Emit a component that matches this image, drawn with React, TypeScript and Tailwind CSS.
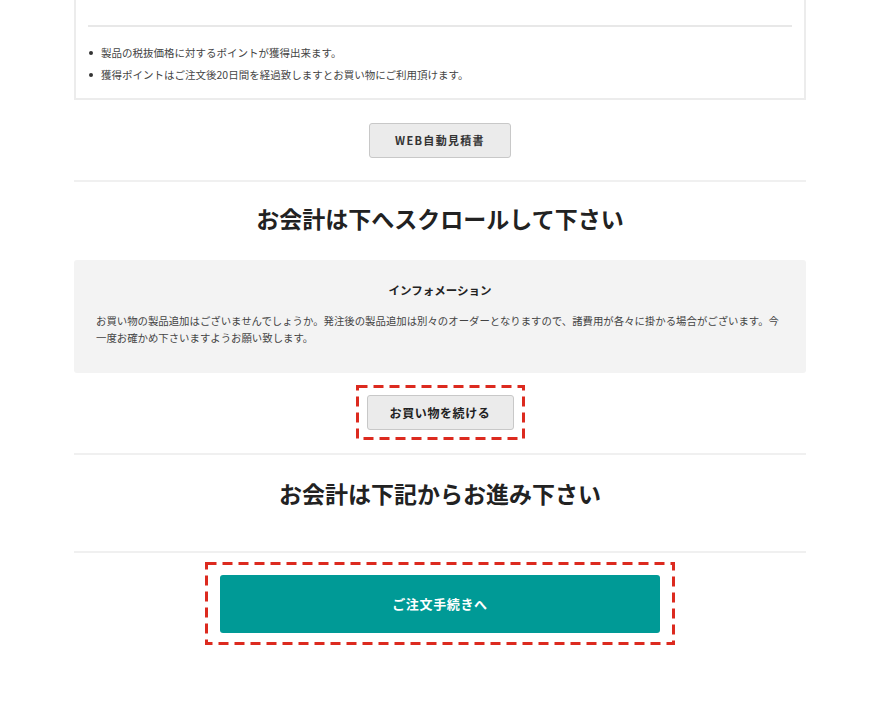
const jp = { fontFamily: '"Noto Sans CJK JP", "Noto Sans", sans-serif' };

const notes = [
  '製品の税抜価格に対するポイントが獲得出来ます。',
  '獲得ポイントはご注文後20日間を経過致しますとお買い物にご利用頂けます。',
];

function Dashed({ className, children }: { className: string; children: React.ReactNode }) {
  return (
    <div className={`relative ${className}`}>
      <svg className="pointer-events-none absolute inset-0 h-full w-full" preserveAspectRatio="none">
        <rect
          x="1.5"
          y="1.5"
          width="calc(100% - 3px)"
          height="calc(100% - 3px)"
          fill="none"
          stroke="#dc2a1f"
          strokeWidth="3"
          strokeDasharray="10 6"
        />
      </svg>
      {children}
    </div>
  );
}

export default function App() {
  return (
    <div className="min-h-[704px] bg-white text-[#333]" style={jp}>
      <div className="ml-[74px] w-[732px]">
        {/* point card */}
        <div className="border-x-2 border-b-2 border-[#ececec] px-3 pt-[25px] pb-[15px]">
          <div className="h-[2px] bg-[#e8e8e8]" />
          <ul className="mt-[18px] flex flex-col gap-[6px]">
            {notes.map((n) => (
              <li key={n} className="flex h-[16px] items-center text-[10.5px] text-[#444]">
                <span className="ml-[1px] mr-[8px] h-[4px] w-[4px] rounded-full bg-[#333]" />
                {n}
              </li>
            ))}
          </ul>
        </div>

        <div className="mt-[23px] flex justify-center">
          <button className="h-[35px] w-[142px] rounded-[3px] border border-[#c8c8c8] bg-[#ebebeb] text-[11px] font-bold tracking-[0.12em] text-[#333]">
            WEB自動見積書
          </button>
        </div>

        <div className="mt-[22px] h-[2px] bg-[#f0f0f0]" />

        <h2 className="pt-[23px] pb-[29px] text-center text-[23px] leading-[26px] font-bold text-[#222]">
          お会計は下へスクロールして下さい
        </h2>

        {/* info */}
        <div className="h-[113px] rounded-[3px] bg-[#f3f3f3] px-[22px] pt-[22px]">
          <div className="text-center text-[11.5px] font-bold text-[#222]">インフォメーション</div>
          <p className="mt-[13px] text-[10.4px] leading-[17px] text-[#444]">
            お買い物の製品追加はございませんでしょうか。発注後の製品追加は別々のオーダーとなりますので、諸費用が各々に掛かる場合がございます。今一度お確かめ下さいますようお願い致します。
          </p>
        </div>

        <div className="mt-[12px] flex justify-center">
          <Dashed className="px-[11px] py-[10px]">
            <button className="h-[35px] w-[147px] rounded-[3px] border border-[#c8c8c8] bg-[#ebebeb] text-[12px] font-bold tracking-[0.05em] text-[#222]">
              お買い物を続ける
            </button>
          </Dashed>
        </div>

        <div className="mt-[13px] h-[2px] bg-[#f0f0f0]" />

        <h2 className="h-[96px] pt-[25px] text-center text-[23px] leading-[26px] font-bold text-[#222]">
          お会計は下記からお進み下さい
        </h2>

        <div className="h-[2px] bg-[#f0f0f0]" />

        <div className="mt-[9px] flex justify-center">
          <Dashed className="px-[15px] pt-[13px] pb-[12px]">
            <button className="h-[58px] w-[440px] rounded-[3px] bg-[#009a96] text-[13px] font-bold tracking-[0.05em] text-white">
              ご注文手続きへ
            </button>
          </Dashed>
        </div>
      </div>
    </div>
  );
}
